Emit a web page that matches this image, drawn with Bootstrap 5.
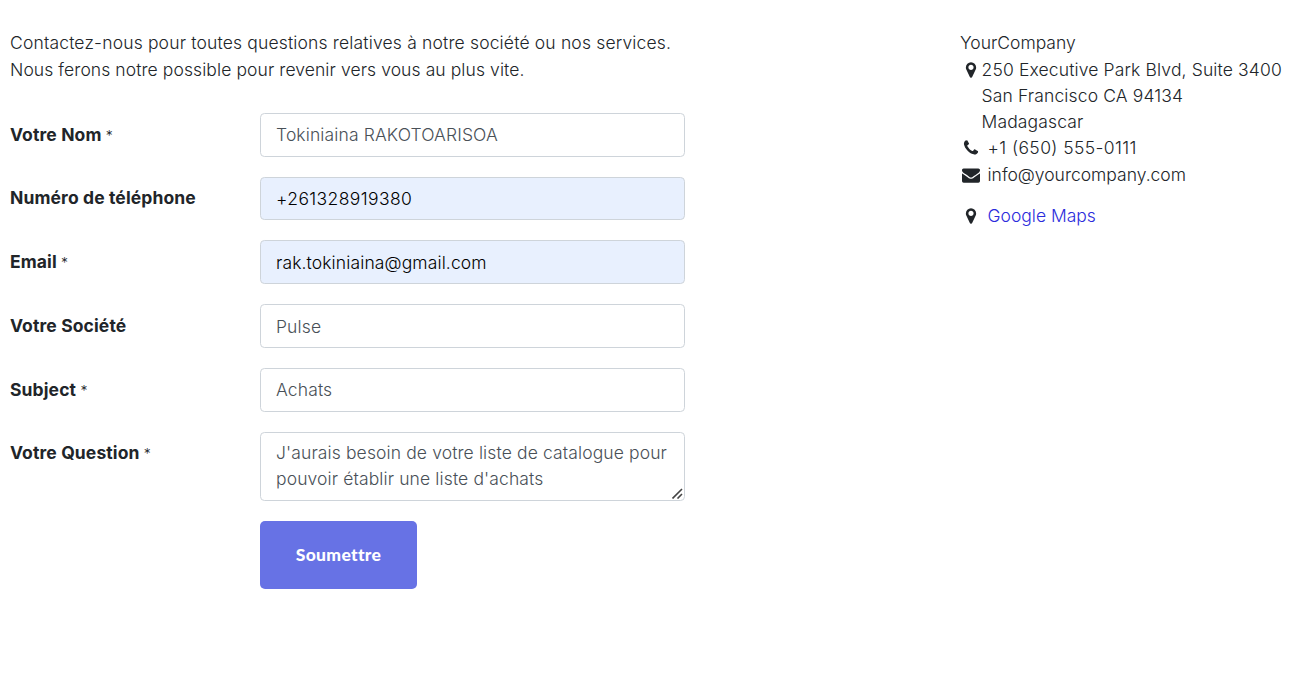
<!DOCTYPE html>
<html lang="fr">
<head>
<meta charset="utf-8">
<meta name="viewport" content="width=device-width, initial-scale=1">
<title>Contactez-nous</title>
<link href="https://cdn.jsdelivr.net/npm/bootstrap@5.3.0/dist/css/bootstrap.min.css" rel="stylesheet">
<style>
body{font-family:Inter,sans-serif;font-weight:300;font-size:17.5px;line-height:26.25px;color:#212529;background:#fff;overflow:hidden}
.page{padding:30px 0 0 10px}
.form-side{width:950px}
.intro{margin:-1px 0 29.88px;line-height:27px}
.intro-lead{letter-spacing:.165px}
.intro-rest{letter-spacing:.09px}
.field-row{margin-bottom:20px}
.field-label{width:250px;padding-top:8.74px;font-weight:700;font-size:17.5px;line-height:26.25px;letter-spacing:.12px}
.req{font-weight:300;font-size:14px}
.field-box{width:425px}
.form-control{font-size:17.5px;font-weight:300;line-height:26.25px;height:43.75px;padding:7px 15px;border:1px solid #ced4da;border-radius:4.4px;color:#495057;display:block;letter-spacing:.12px}
.form-control.autofilled{background:#e8f0fe;color:#000}
.form-control.digits{letter-spacing:.4px}
textarea.form-control{height:69px;min-height:69px;padding:7px 15px;resize:none;overflow:hidden}
.grip{position:absolute;right:2px;bottom:2px;width:11px;height:11px;pointer-events:none}
.btn-send{margin-left:250px;width:157px;height:68px;padding:1px 0 0;background:#6772e5;color:#fff;border:0;border-radius:5px;font-family:Lato,sans-serif;font-weight:900;font-size:17.5px;letter-spacing:.32px}
.btn-send:hover{background:#5661d4;color:#fff}
.fa-ico{width:22px;flex:none;text-align:center;line-height:26.25px}
.fa-ico svg{width:18px;height:18px;fill:#212529;display:inline-block;vertical-align:-3px}
.wide-gap{margin-left:5.5px}
.company{height:26.7px}
.street{letter-spacing:.14px;margin-left:-.5px}
.tel{letter-spacing:.4px}
.mail-row{padding-top:.4px}
.maps-row{margin-top:14.5px}
.maps-link{color:#2b2bdc;text-decoration:none}
</style>
</head>
<body>
<svg class="d-none" aria-hidden="true">
<symbol id="marker" viewBox="0 0 1792 1792"><path d="M1152 640q0-106-75-181t-181-75-181 75-75 181 75 181 181 75 181-75 75-181zm256 0q0 109-33 179l-364 774q-16 33-47.5 52t-67.5 19-67.5-19-46.5-52l-365-774q-33-70-33-179 0-212 150-362t362-150 362 150 150 362z"/></symbol>
<symbol id="phone" viewBox="0 0 1792 1792"><path d="M1600 1240q0 27-10 70.5t-21 68.5q-21 50-122 106-94 51-186 51-27 0-53-3.5t-57.5-12.5-47-14.5-55.5-20.5-49-18q-98-35-175-83-127-79-264-216t-216-264q-48-77-83-175-3-9-18-49t-20.5-55.5-14.5-47-12.5-57.5-3.5-53q0-92 51-186 56-101 106-122 25-11 68.5-21t70.5-10q14 0 21 3 18 6 53 76 11 19 30 54t35 63.5 31 53.5q3 4 17.5 25t21.5 35.5 7 28.5q0 20-28.5 50t-62 55-62 53-28.5 46q0 9 5 22.5t8.5 20.5 14 24 11.5 19q76 137 174 235t235 174q2 1 19 11.5t24 14 20.5 8.5 22.5 5q18 0 46-28.5t53-62 55-62 50-28.5q14 0 28.5 7t35.5 21.5 25 17.5q25 15 53.5 31t63.5 35 54 30q70 35 76 53 3 7 3 21z"/></symbol>
<symbol id="envelope" viewBox="0 0 1792 1792"><path d="M1792 710v794q0 66-47 113t-113 47h-1472q-66 0-113-47t-47-113v-794q44 49 101 87 362 246 497 345 57 42 92.5 65.5t94.5 48 110 24.5h2q51 0 110-24.5t94.5-48 92.5-65.5q170-123 498-345 57-39 100-87zm0-294q0 79-49 151t-122 123q-376 261-468 325-10 7-42.5 31t-54 38.5-52 32.5-57.5 27-50 9h-2q-23 0-50-9t-57.5-27-52-32.5-54-38.5-42.5-31q-91-64-262-182.5t-205-142.5q-62-42-117-115.5t-55-136.5q0-78 41.5-130t118.5-52h1472q65 0 112.5 47t47.5 113z"/></symbol>
</svg>
<main class="page d-flex align-items-start">
  <section class="form-side flex-shrink-0">
    <p class="intro"><span class="intro-lead">Contactez-nous pour toutes questions relatives à notre société ou nos services.</span><br><span class="intro-rest">Nous ferons notre possible pour revenir vers vous au plus vite.</span></p>
    <form>
      <div class="field-row d-flex"><label class="field-label" for="f1">Votre Nom <span class="req">*</span></label><div class="field-box"><input id="f1" class="form-control" value="Tokiniaina RAKOTOARISOA"></div></div>
      <div class="field-row d-flex"><label class="field-label" for="f2">Numéro de téléphone</label><div class="field-box"><input id="f2" class="form-control autofilled digits" value="+261328919380"></div></div>
      <div class="field-row d-flex"><label class="field-label" for="f3">Email <span class="req">*</span></label><div class="field-box"><input id="f3" class="form-control autofilled" value="rak.tokiniaina@gmail.com"></div></div>
      <div class="field-row d-flex"><label class="field-label" for="f4">Votre Société</label><div class="field-box"><input id="f4" class="form-control" value="Pulse"></div></div>
      <div class="field-row d-flex"><label class="field-label" for="f5">Subject <span class="req">*</span></label><div class="field-box"><input id="f5" class="form-control" value="Achats"></div></div>
      <div class="field-row d-flex"><label class="field-label" for="f6">Votre Question <span class="req">*</span></label><div class="field-box position-relative"><textarea id="f6" class="form-control" spellcheck="false">J'aurais besoin de votre liste de catalogue pour pouvoir établir une liste d'achats</textarea><svg class="grip" viewBox="0 0 11 11" fill="none" stroke="#444" stroke-width="1.6"><path d="M.5 10.5l9.500-9.500M5.500 10.500l4.500-4.500"/></svg></div></div>
      <button type="button" class="btn btn-send">Soumettre</button>
    </form>
  </section>
  <address class="mb-0 text-nowrap">
    <div class="company">YourCompany</div>
    <div class="d-flex"><span class="fa-ico"><svg><use href="#marker"/></svg></span><span class="street">250 Executive Park Blvd, Suite 3400<br>San Francisco CA 94134<br>Madagascar</span></div>
    <div class="d-flex"><span class="fa-ico"><svg><use href="#phone"/></svg></span><span class="wide-gap tel">+1 (650) 555-0111</span></div>
    <div class="d-flex mail-row"><span class="fa-ico"><svg><use href="#envelope"/></svg></span><span class="wide-gap">info@yourcompany.com</span></div>
    <div class="d-flex maps-row"><span class="fa-ico"><svg><use href="#marker"/></svg></span><a class="maps-link wide-gap" href="#">Google Maps</a></div>
  </address>
</main>
<script src="https://cdn.jsdelivr.net/npm/bootstrap@5.3.0/dist/js/bootstrap.bundle.min.js"></script>
</body>
</html>
